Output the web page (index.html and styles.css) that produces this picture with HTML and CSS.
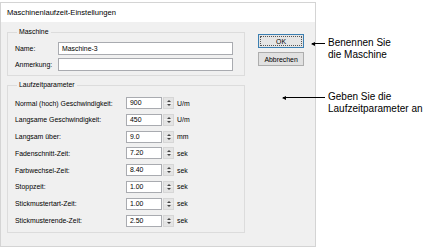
FILE: index.html
```html
<!DOCTYPE html>
<html lang="de">
<head>
  <meta charset="UTF-8">
  <title>Maschinenlaufzeit-Einstellungen</title>
  <link rel="stylesheet" href="styles.css">
</head>
<body>

<div class="page">
  <div class="dialog">
    <div class="titlebar">Maschinenlaufzeit-Einstellungen</div>
    <div class="client">
      <div class="groups">
        <fieldset class="group group-machine">
          <legend>Maschine</legend>
          <div class="field">
            <label>Name:</label>
            <div class="textbox wide">Maschine-3</div>
          </div>
          <div class="field">
            <label>Anmerkung:</label>
            <div class="textbox wide"></div>
          </div>
        </fieldset>

        <fieldset class="group group-params">
          <legend>Laufzeitparameter</legend>
          <div class="param"><label>Normal (hoch) Geschwindigkeit:</label><div class="textbox">900</div><span class="spin"></span><span class="unit">U/m</span></div>
          <div class="param"><label>Langsame Geschwindigkeit:</label><div class="textbox">450</div><span class="spin"></span><span class="unit">U/m</span></div>
          <div class="param"><label>Langsam über:</label><div class="textbox">9.0</div><span class="spin"></span><span class="unit">mm</span></div>
          <div class="param"><label>Fadenschnitt-Zeit:</label><div class="textbox">7.20</div><span class="spin"></span><span class="unit">sek</span></div>
          <div class="param"><label>Farbwechsel-Zeit:</label><div class="textbox">8.40</div><span class="spin"></span><span class="unit">sek</span></div>
          <div class="param"><label>Stoppzeit:</label><div class="textbox">1.00</div><span class="spin"></span><span class="unit">sek</span></div>
          <div class="param"><label>Stickmustertart-Zeit:</label><div class="textbox">1.00</div><span class="spin"></span><span class="unit">sek</span></div>
          <div class="param"><label>Stickmusterende-Zeit:</label><div class="textbox">2.50</div><span class="spin"></span><span class="unit">sek</span></div>
        </fieldset>
      </div>

      <div class="buttons">
        <button class="btn default"><span>OK</span></button>
        <button class="btn">Abbrechen</button>
      </div>
    </div>
  </div>

  <div class="callouts">
    <div class="callout callout-name">
      <span class="arrow"></span>
      Benennen Sie<br>die Maschine
    </div>
    <div class="callout callout-params">
      <span class="arrow"></span>
      Geben Sie die<br>Laufzeitparameter an
    </div>
  </div>
</div>

</body>
</html>
```

FILE: styles.css
```css
body { margin: 0; background: #fff; font-family: "Liberation Sans", Arial, sans-serif; color: #000; }
.page { display: flex; align-items: flex-start; }

.dialog { width: 314px; height: 243px; margin-top: 2px; border: 1px solid #d4d4d4; display: flex; flex-direction: column; }
.titlebar { height: 19px; line-height: 19px; padding-left: 6px; font-size: 7.6px; background: #fff; }
.client { flex: 1; background: #f0f0f0; display: flex; gap: 13px; padding: 5px 11px 0 6px; }

.groups { width: 239px; }
.group { margin: 0; border: 1px solid #dcdcdc; border-radius: 0; font-size: 6.9px; }
.group legend { padding: 0 2px; margin-left: 2px; line-height: 10px; }
.group-machine { padding: 5px 11px 4px 7px; }
.group-params { margin-top: 4px; padding: 7px 11px 5px 7px; }

.field { display: flex; align-items: center; height: 13px; }
.field + .field { margin-top: 3px; }
.field label { width: 43px; }

.textbox { box-sizing: border-box; height: 12px; line-height: 10px; padding-left: 3px; background: #fff; border: 1px solid #a9abb0; width: 36px; }
.textbox.wide { flex: 1; height: 13px; line-height: 11px; }

.param { display: flex; align-items: center; height: 12px; }
.param + .param { margin-top: 4.8px; }
.param label { width: 111px; }
.spin { width: 11px; height: 12px; margin-left: 1px; background:
  linear-gradient(#f0f0f0, #f0f0f0) center / 9px 1px no-repeat,
  #e4e4e4; position: relative; border: 1px solid #d6d6d6; box-sizing: border-box; }
.spin::before, .spin::after { content: ""; position: absolute; left: 2.5px; border-left: 2px solid transparent; border-right: 2px solid transparent; }
.spin::before { top: 2px; border-bottom: 2px solid #444; }
.spin::after { bottom: 2px; border-top: 2px solid #444; }
.unit { margin-left: 3px; }

.buttons { display: flex; flex-direction: column; gap: 4px; margin-top: 7px; width: 46px; }
.btn { box-sizing: border-box; height: 14px; padding: 0; font-family: inherit; font-size: 6.9px; background: #e1e1e1; border: 1px solid #adadad; border-radius: 0; color: #000; }
.btn.default { border-color: #3c7fb1; background: #e5e5e5; padding: 1px; }
.btn.default span { display: block; height: 100%; line-height: 10px; border: 1px dotted #555; box-sizing: border-box; }

.callouts { display: flex; flex-direction: column; padding-left: 12px; font-size: 10px; line-height: 12px; }
.callout { position: relative; }
.callout-name { margin-top: 37px; }
.callout-params { margin-top: 30px; }
.arrow { position: absolute; top: 6px; height: 1px; background: #000; }
.arrow::before { content: ""; position: absolute; left: -1px; top: -1.5px; border-right: 4px solid #000; border-top: 2px solid transparent; border-bottom: 2px solid transparent; }
.callout-name .arrow { left: -16px; width: 13px; }
.callout-params .arrow { left: -45px; width: 42px; }
```
